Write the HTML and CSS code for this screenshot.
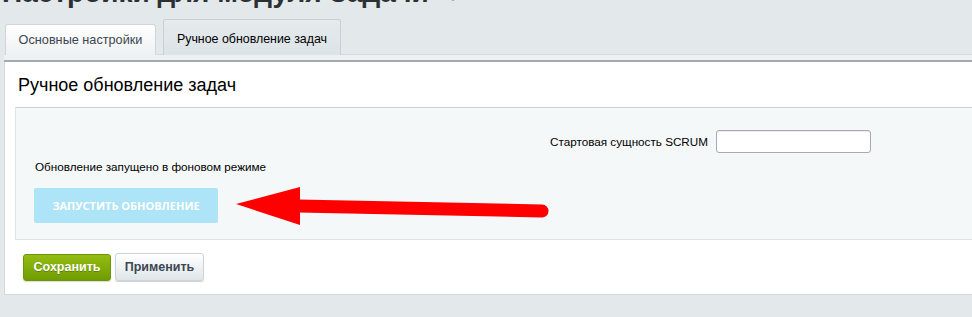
FILE: index.html
```html
<!DOCTYPE html>
<html lang="ru">
<head>
<meta charset="utf-8">
<title>Ручное обновление задач</title>
<link rel="stylesheet" href="styles.css">
</head>
<body>
<div class="page-head">
  <h1 class="page-title">Настройки для модуля Задачи</h1>
  <span class="pin">&#10033;</span>
</div>
<div class="tabs">
  <div class="tab">Основные настройки</div>
  <div class="tab tab-active">Ручное обновление задач</div>
</div>
<div class="tabs-strip"></div>
<div class="panel">
  <h2 class="panel-title">Ручное обновление задач</h2>
  <div class="box">
    <div class="field-row">
      <label class="field-label" for="scrum">Стартовая сущность SCRUM</label>
      <input class="field-input" id="scrum" type="text">
    </div>
    <div class="note">Обновление запущено в фоновом режиме</div>
    <div class="action-row">
      <button class="btn-run" type="button">Запустить обновление</button>
      <svg class="arrow" width="320" height="44" viewBox="0 0 320 44">
        <polygon points="0,18 64,1 64,39" fill="#ff0000"/>
        <line x1="62" y1="20" x2="306" y2="25" stroke="#ff0000" stroke-width="13" stroke-linecap="round"/>
      </svg>
    </div>
  </div>
  <div class="footer">
    <button class="btn btn-save" type="button">Сохранить</button>
    <button class="btn btn-apply" type="button">Применить</button>
  </div>
</div>
</body>
</html>
```

FILE: styles.css
```css
html, body {
  margin: 0;
  padding: 0;
}
body {
  background: #e3e9eb;
  font-family: "Liberation Sans", Arial, sans-serif;
  color: #000;
  height: 317px;
  overflow: hidden;
}
.page-head {
  height: 19px;
  overflow: hidden;
  display: flex;
  align-items: flex-start;
  padding-left: 2px;
}
.page-title {
  margin: -22px 0 0 0;
  font-size: 28px;
  line-height: 30px;
  font-weight: bold;
  color: #2d3033;
  white-space: nowrap;
}
.pin {
  margin: -12px 0 0 18px;
  color: #a9b0b3;
  font-size: 14px;
}
.tabs {
  display: flex;
  align-items: flex-end;
  gap: 7px;
  padding-left: 5px;
  height: 36px;
}
.tab {
  box-sizing: border-box;
  height: 31px;
  width: 151px;
  border: 1px solid #cfd5d8;
  border-bottom: none;
  border-radius: 3px 3px 0 0;
  background: linear-gradient(#ffffff, #eef1f2);
  color: #3b4650;
  font-size: 12.7px;
  text-align: center;
  line-height: 31px;
}
.tab-active {
  height: 36px;
  width: 178px;
  line-height: 38px;
  font-size: 12.4px;
  background: linear-gradient(#e6ebed, #dce3e6);
  border-color: #c9d0d3;
  color: #000;
}
.tabs-strip {
  height: 5px;
  background: #edf1f2;
  border-top: 1px solid #d5dcde;
  border-bottom: 2px solid #a2aaad;
  margin-left: 4px;
  box-sizing: content-box;
  margin-top: -1px;
}
.panel {
  margin-left: 4px;
  background: #fff;
  border-left: 1px solid #d3d9db;
  border-bottom: 1px solid #d3d9db;
  height: 233px;
  box-sizing: border-box;
  padding-top: 13px;
}
.panel-title {
  margin: 0 0 0 13px;
  font-size: 18px;
  font-weight: normal;
  line-height: 20px;
  color: #000;
}
.box {
  margin: 12px 0 0 10px;
  background: #f5f8f9;
  border-top: 1px solid #ccd3d6;
  border-left: 1px solid #dfe5e7;
  border-bottom: 1px solid #dfe5e7;
  height: 133px;
  box-sizing: border-box;
  padding-top: 22px;
}
.field-row {
  display: flex;
  align-items: center;
  height: 23px;
}
.field-label {
  width: 700px;
  text-align: right;
  font-size: 11.7px;
  color: #000;
  padding-right: 8px;
  box-sizing: border-box;
}
.field-input {
  box-sizing: border-box;
  width: 155px;
  height: 23px;
  margin: 0;
  border: 1px solid #a5abb0;
  border-radius: 3px;
  background: #fff;
  box-shadow: inset 0 1px 1px rgba(0,0,0,0.08);
}
.note {
  margin: 7px 0 0 19px;
  font-size: 11.7px;
  line-height: 14px;
  color: #000;
}
.action-row {
  display: flex;
  align-items: center;
  margin: 14px 0 0 18px;
  height: 35px;
}
.btn-run {
  box-sizing: border-box;
  width: 184px;
  height: 35px;
  border: none;
  border-radius: 2px;
  background: #ade4f7;
  color: #fff;
  font-family: "Open Sans", "Liberation Sans", sans-serif;
  font-weight: bold;
  font-size: 11px;
  text-transform: uppercase;
  padding: 0;
}
.arrow {
  display: block;
  margin-left: 18px;
  margin-top: 4px;
  flex: none;
}
.footer {
  display: flex;
  gap: 4px;
  align-items: center;
  margin: 13px 0 0 18px;
}
.btn {
  box-sizing: border-box;
  height: 27px;
  border-radius: 3px;
  font-family: "Liberation Sans", Arial, sans-serif;
  font-size: 12.5px;
  font-weight: bold;
  padding: 0;
}
.btn-save {
  width: 88px;
  background: linear-gradient(#93bd12, #6f9d00);
  border: 1px solid #6e9407;
  color: #fff;
  text-shadow: 0 1px 0 rgba(0,0,0,0.25);
  box-shadow: 0 1px 1px rgba(0,0,0,0.15);
}
.btn-apply {
  width: 89px;
  height: 28px;
  background: linear-gradient(#ffffff, #dfe6e8);
  border: 1px solid #cdd3d6;
  color: #3c4752;
  box-shadow: 0 1px 1px rgba(0,0,0,0.18);
}
```
